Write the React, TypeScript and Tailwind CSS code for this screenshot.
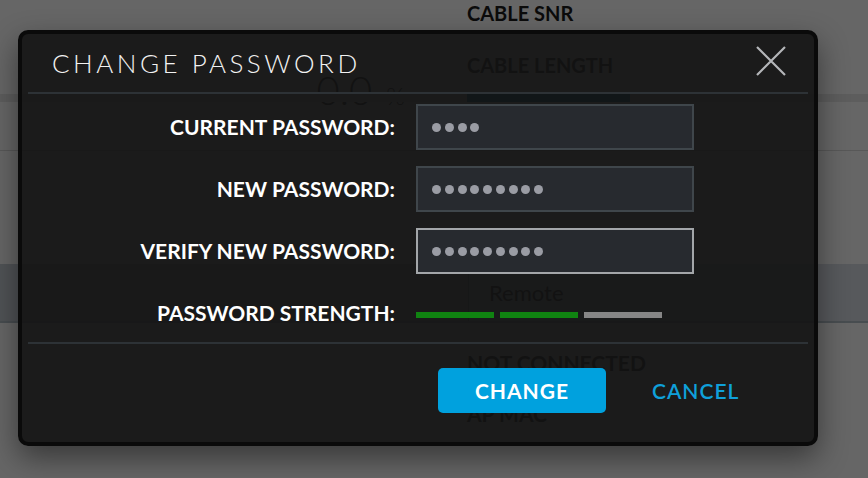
import React from "react";

const fields = [
  { label: "CURRENT PASSWORD:", dots: 4, focused: false },
  { label: "NEW PASSWORD:", dots: 9, focused: false },
  { label: "VERIFY NEW PASSWORD:", dots: 9, focused: true },
];

function Dots({ n }: { n: number }) {
  return (
    <div className="flex items-center gap-[3.75px]">
      {Array.from({ length: n }).map((_, i) => (
        <span key={i} className="h-[9px] w-[9px] rounded-full bg-[#9a9ca4]" />
      ))}
    </div>
  );
}

function BackgroundPage() {
  return (
    <div className="flex flex-col text-[#0b0b0b]">
      <div className="flex h-[94px]">
        <div className="flex w-[467px] items-end justify-end pr-[62px]">
          <div className="-mb-[16px] flex items-baseline gap-[14px] font-light">
            <span className="text-[40px] leading-none">0.0</span>
            <span className="text-[24px] leading-none">%</span>
          </div>
        </div>
        <div className="flex flex-col">
          <div className="text-[20px] font-bold leading-[26px]">CABLE SNR</div>
          <div className="mt-[26px] text-[20px] font-bold leading-[26px]">CABLE LENGTH</div>
        </div>
      </div>
      <div className="h-[8px] bg-[#5d5d5d] pl-[467px]">
        <div className="h-full w-[163px] bg-[#06324a]" />
      </div>
      <div className="h-[49px] border-b border-[#585858]" />
      <div className="h-[113px]" />
      <div className="flex h-[59px] border-b-2 border-[#484d50] bg-[#505356] pl-[468px]">
        <div className="flex flex-1 items-center border-l border-[#3a3d40] bg-[#57595c] pl-[20px] text-[22px] leading-none">
          Remote
        </div>
      </div>
      <div className="pl-[467px] pt-[27px] text-[21px] font-bold leading-[26px]">NOT CONNECTED</div>
      <div className="pl-[467px] pt-[25px] text-[21px] font-bold leading-[26px]">AP MAC</div>
    </div>
  );
}

export default function App() {
  return (
    <div className="relative h-[478px] w-[868px] overflow-hidden bg-[#666666] font-['Lato',sans-serif]">
      <BackgroundPage />

      {/* modal */}
      <div className="absolute left-[18px] top-[30px] flex h-[416px] w-[800px] flex-col rounded-[10px] border-4 border-[#0a0a0a] bg-[#131313]/90 shadow-[0_12px_30px_rgba(0,0,0,0.45)]">
        <div className="flex h-[58px] items-center justify-between pl-[30px] pr-[28px]">
          <h1 className="text-[26px] font-light leading-none tracking-[3.5px] text-[#f2f2f2]">CHANGE PASSWORD</h1>
          <svg width="30" height="30" viewBox="0 0 30 30" className="mt-[-4px]">
            <path d="M1 1 L29 29 M29 1 L1 29" stroke="#b4b6b9" strokeWidth="2.2" fill="none" />
          </svg>
        </div>
        <div className="mx-[6px] h-[2px] bg-[#2d3236]" />

        <div className="mt-[10px] grid grid-cols-[373px_278px] gap-x-[21px] gap-y-[16px]">
          {fields.map((f) => (
            <React.Fragment key={f.label}>
              <div className="flex items-center justify-end text-[21px] font-bold text-white">{f.label}</div>
              <div
                className={
                  "flex h-[46px] items-center border-2 bg-[#272a2f] pl-[14px] " +
                  (f.focused ? "border-[#a3a6a9]" : "border-[#3f464b]")
                }
              >
                <Dots n={f.dots} />
              </div>
            </React.Fragment>
          ))}
          <div className="flex h-[46px] items-center justify-end text-[21px] font-bold text-white">PASSWORD STRENGTH:</div>
          <div className="flex items-center gap-[6px] pt-[4px]">
            <span className="h-[6px] w-[78px] bg-[#108311]" />
            <span className="h-[6px] w-[78px] bg-[#108311]" />
            <span className="h-[6px] w-[78px] bg-[#868686]" />
          </div>
        </div>

        <div className="mx-[6px] mt-[6px] h-[2px] bg-[#2d3236]" />

        <div className="flex items-center pl-[416px] pt-[24px]">
          <button className="h-[45px] w-[168px] rounded-[5px] bg-[#00a1de] text-[21px] font-bold tracking-[1px] text-white">
            CHANGE
          </button>
          <button className="ml-[46px] text-[21px] font-semibold tracking-[1px] text-[#0fa0da]">CANCEL</button>
        </div>
      </div>
    </div>
  );
}
